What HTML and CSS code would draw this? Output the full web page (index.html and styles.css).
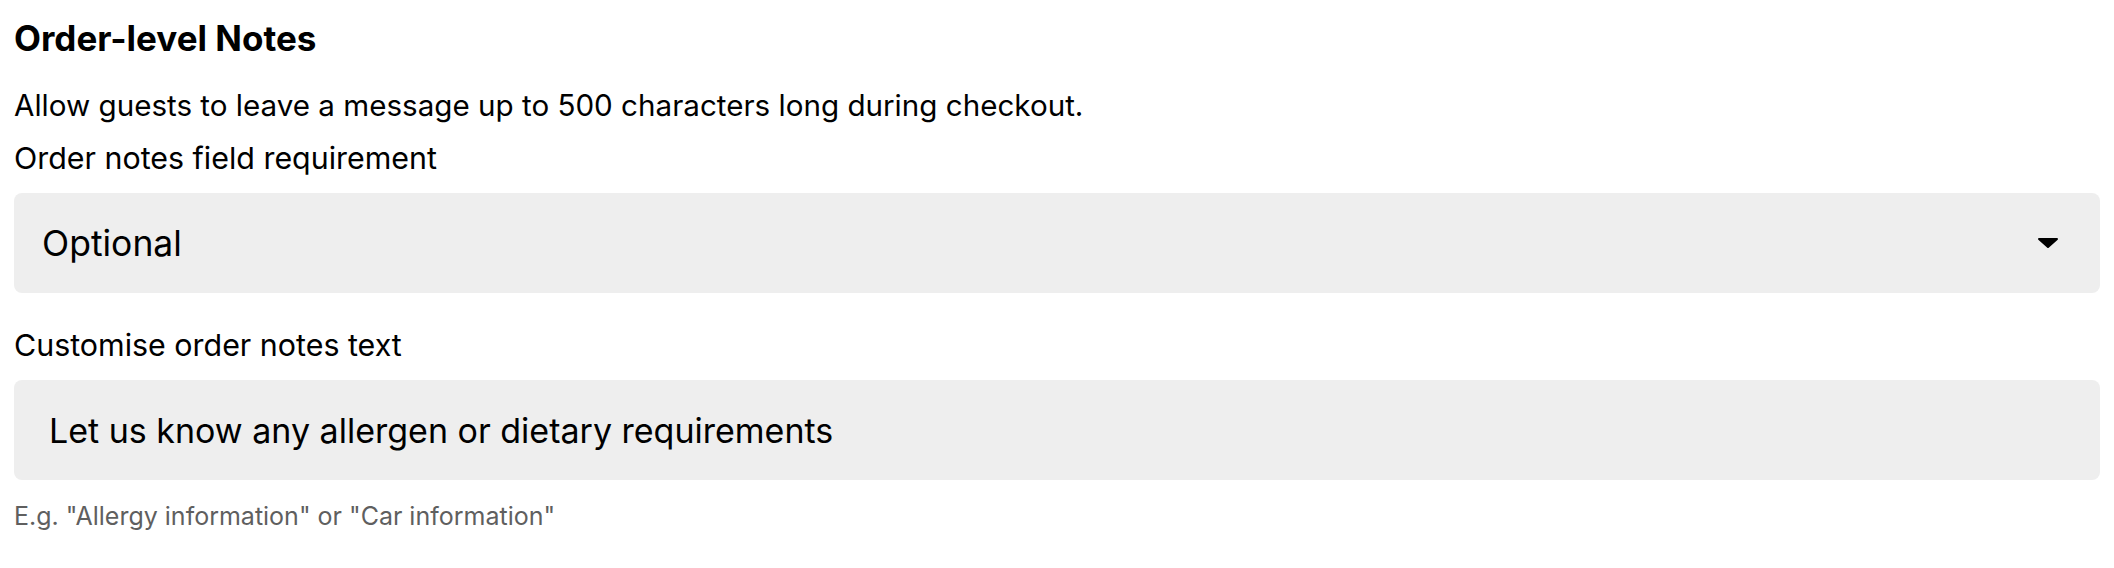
FILE: index.html
```html
<!DOCTYPE html>
<html lang="en">
<head>
  <meta charset="UTF-8">
  <meta name="viewport" content="width=device-width, initial-scale=1.0">
  <title>Order-level Notes</title>
  <link rel="stylesheet" href="styles.css">
</head>
<body>
  <div class="section">
    <h2>Order-level Notes</h2>
    <p class="intro">Allow guests to leave a message up to 500 characters long during checkout.</p>

    <div class="field first">
      <label class="field-label" for="requirement">Order notes field requirement</label>
      <div class="select">
        <span class="select-value">Optional</span>
        <svg class="caret" width="20" height="10" viewBox="0 0 20 10">
          <path d="M1 0h18a1 1 0 0 1 .7 1.7l-9 8a1 1 0 0 1-1.4 0l-9-8A1 1 0 0 1 1 0z" fill="#000"/>
        </svg>
      </div>
    </div>

    <div class="field">
      <label class="field-label" for="notesText">Customise order notes text</label>
      <div class="input" id="notesText">Let us know any allergen or dietary requirements</div>
      <p class="hint">E.g. "Allergy information" or "Car information"</p>
    </div>
  </div>
</body>
</html>
```

FILE: styles.css
```css
body {
  font-family: Inter, "Noto Sans", sans-serif;
  color: #000;
  background: #fff;
  margin: 0;
  padding: 16px 14px 0;
}
h2 {
  font-size: 35px;
  font-weight: 700;
  line-height: 44px;
  margin: 0;
}
.intro {
  font-size: 29.6px;
  line-height: 40px;
  margin: 25px 0 0;
}
.field {
  margin-top: 32px;
}
.field.first {
  margin-top: 13px;
}
.field-label {
  display: block;
  font-size: 30.4px;
  line-height: 40px;
  margin-bottom: 15px;
}
.select,
.input {
  display: flex;
  align-items: center;
  height: 100px;
  background: #eeeeee;
  border-radius: 8px;
  box-sizing: border-box;
}
.select {
  justify-content: space-between;
  padding: 0 42px 0 28px;
  font-size: 35.5px;
}
.input {
  padding: 0 35px;
  font-size: 34px;
}
.caret {
  display: block;
}
.hint {
  font-size: 25px;
  line-height: 34px;
  color: #5f5f5f;
  margin: 19px 0 0;
}
```
